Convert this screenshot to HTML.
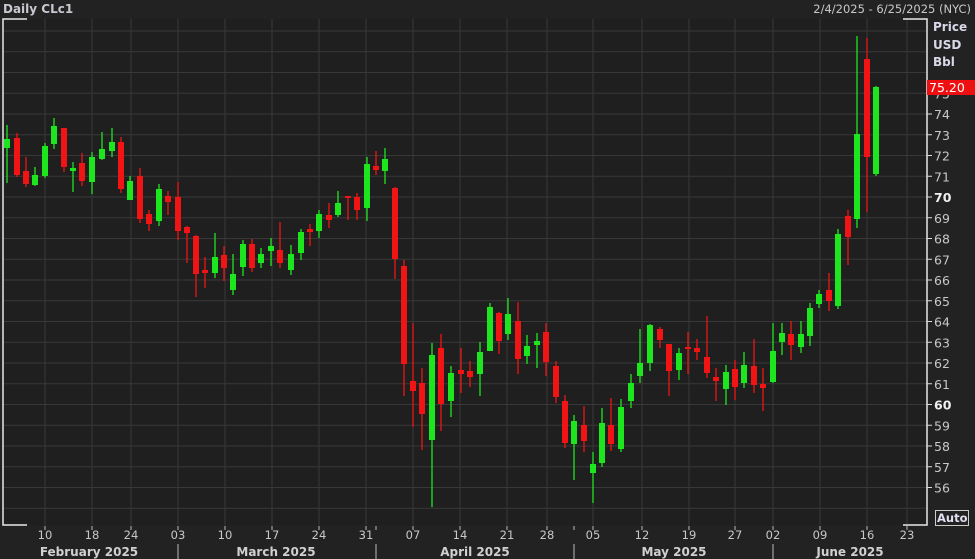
<!DOCTYPE html>
<html><head><meta charset="utf-8"><style>
html,body{margin:0;padding:0;background:#222222;width:975px;height:559px;overflow:hidden}
svg{display:block}
text{font-family:"DejaVu Sans","Liberation Sans",sans-serif}
</style></head><body>
<svg id="s" width="975" height="559" xmlns="http://www.w3.org/2000/svg"></svg>
<script>
const s=document.getElementById('s');let h='';
h+='<rect width="975" height="559" fill="#222222"/>';
h+='<rect x="3" y="19" width="924" height="506" fill="#1f1f1f"/>';
const Y=p=>114+(74-p)*20.75;
// horizontal grid
for(let p=55;p<=78;p++){const y=Y(p);if(y>19&&y<525)h+=`<line x1="3" x2="927" y1="${y}" y2="${y}" stroke="#383838" stroke-width="1"/>`;}
const wx=[45,92,131,178,225,272,319,366,413,460,507,547,593,642,689,735,773,820,867,907];
const wl=['10','18','24','03','10','17','24','31','07','14','21','28','05','12','19','27','02','09','16','23'];
wx.forEach((x,i)=>{h+=`<line x1="${x}" x2="${x}" y1="19" y2="525" stroke="#383838"/>`;
h+=`<line x1="${x}" x2="${x}" y1="526" y2="530" stroke="#bbb"/>`;
h+=`<text x="${x}" y="539" fill="#c8c8c8" font-size="11.5" text-anchor="middle">${wl[i]}</text>`;});
[178,376,574,773].forEach(x=>{h+=`<line x1="${x}" x2="${x}" y1="526" y2="530" stroke="#bbb"/><line x1="${x}" x2="${x}" y1="544" y2="559" stroke="#bbb"/>`;});
[['February 2025',89],['March 2025',276],['April 2025',475],['May 2025',674],['June 2025',850]].forEach(m=>{
h+=`<text x="${m[1]}" y="556" fill="#d0d0d0" font-size="12" font-weight="bold" text-anchor="middle">${m[0]}</text>`;});
// candles: x, wickTop, wickBot, bodyTop, bodyBot, green?
const c=[
[7,125,183,139,148,1],[17,133,177,138,175,0],[26,157,187,171,184,0],[35,167,186,175,185,1],[45,143,178,146,176,1],[54,118,149,126,144,1],[64,128,172,128,167,0],[73,162,192,168,171,1],[82,153,186,163,181,0],[92,152,194,157,182,1],[102,132,160,149,159,1],[112,128,157,142,151,1],[121,137,193,142,189,0],[130,176,200,181,200,1],[140,168,223,176,219,0],[149,210,231,214,224,0],[159,184,226,189,221,1],[168,191,215,196,202,0],[178,182,240,197,231,0],[187,226,263,227,233,0],[196,235,297,236,274,0],[205,257,288,270,273,0],[215,233,278,257,273,1],[224,246,281,255,268,0],[233,254,295,274,290,1],[243,240,276,244,267,1],[252,239,272,244,268,0],[261,248,268,254,263,1],[271,238,266,246,251,1],[280,222,268,250,263,0],[291,245,275,254,270,1],[301,229,260,232,253,1],[310,224,246,229,232,0],[319,210,238,214,231,1],[329,203,228,215,220,0],[338,191,217,203,215,1],[348,196,220,196,198,0],[357,193,220,197,210,0],[367,157,221,164,208,1],[376,151,175,166,170,0],[385,148,184,159,171,1],[395,187,279,188,259,0],[404,260,396,266,364,0],[413,323,427,381,391,0],[422,368,450,383,414,0],[432,343,507,355,440,1],[441,334,431,348,404,0],[451,366,417,373,401,1],[461,348,393,370,374,0],[470,361,387,371,377,0],[480,342,396,352,374,1],[490,303,351,307,351,1],[499,312,354,313,341,0],[508,298,340,314,334,1],[518,302,374,321,359,0],[527,335,364,346,356,1],[537,333,368,341,345,1],[546,323,376,332,362,0],[556,361,403,366,397,0],[565,395,448,401,443,0],[574,415,480,421,444,1],[584,406,452,425,441,0],[593,452,503,464,473,1],
[602,408,467,423,463,1],[611,398,451,425,444,0],[621,399,452,407,449,1],[631,374,408,383,401,1],[640,329,383,363,376,1],[650,324,371,325,363,1],[660,327,348,329,340,0],[669,344,396,344,371,0],[679,348,380,353,370,1],[688,332,374,347,349,0],[697,339,360,348,352,0],[707,316,378,357,373,0],[716,368,401,377,381,0],[726,365,405,372,389,1],[735,360,400,369,387,0],[744,352,388,365,383,1],[754,339,393,366,385,0],[763,368,411,384,388,0],[773,323,383,351,382,1],[782,323,355,333,342,1],[791,321,360,334,345,0],[801,321,353,334,347,1],[810,303,346,308,336,1],[819,290,308,294,304,1],[829,273,311,290,301,0],[838,229,309,234,306,1],[848,210,265,216,237,0],[857,36,228,134,219,1],[867,38,212,59,157,0],[876,86,176,87,174,1]];
c.forEach(k=>{const col=k[5]?'#1ee61e':'#f01414';
h+=`<line x1="${k[0]}" x2="${k[0]}" y1="${k[1]}" y2="${k[2]}" stroke="${col}" stroke-width="1.3"/>`;
h+=`<rect x="${k[0]-3}" y="${k[3]}" width="6" height="${Math.max(2,k[4]-k[3])}" fill="${col}"/>`;});
// frame
h+='<path d="M27 19H3V525H27" fill="none" stroke="#e8e8e8" stroke-width="1.5"/>';
h+='<path d="M903 19H927V525H903" fill="none" stroke="#e8e8e8" stroke-width="1.5"/>';
// right labels
for(let p=56;p<=75;p++){const y=Y(p);const b=(p%10==0);
h+=`<line x1="927" x2="932" y1="${y}" y2="${y}" stroke="#ddd"/>`;
h+=`<text x="934" y="${y+5}" fill="${b?'#f0f0f0':'#c8c8c8'}" font-size="12.5" font-weight="${b?'bold':'normal'}">${p}</text>`;}
h+='<rect x="927" y="80" width="48" height="15" fill="#ee1010"/><text x="929" y="92" fill="#fff" font-size="12.5">75.20</text>';
h+='<text x="933" y="31" fill="#d8d8e8" font-size="12" font-weight="bold">Price</text>';
h+='<text x="933" y="49" fill="#d8d8e8" font-size="12" font-weight="bold">USD</text>';
h+='<text x="933" y="66" fill="#d8d8e8" font-size="12" font-weight="bold">Bbl</text>';
h+='<rect x="935.5" y="510.5" width="33" height="15" fill="none" stroke="#ccc"/><text x="937" y="522" fill="#e0e0f0" font-size="11.5" font-weight="bold">Auto</text>';
h+='<text x="3" y="13" fill="#c8c8d0" font-size="12" font-weight="bold">Daily CLc1</text>';
h+='<text x="971" y="13" fill="#c8c8c8" font-size="11.5" text-anchor="end">2/4/2025 - 6/25/2025 (NYC)</text>';
s.innerHTML=h;
</script>
</body></html>
